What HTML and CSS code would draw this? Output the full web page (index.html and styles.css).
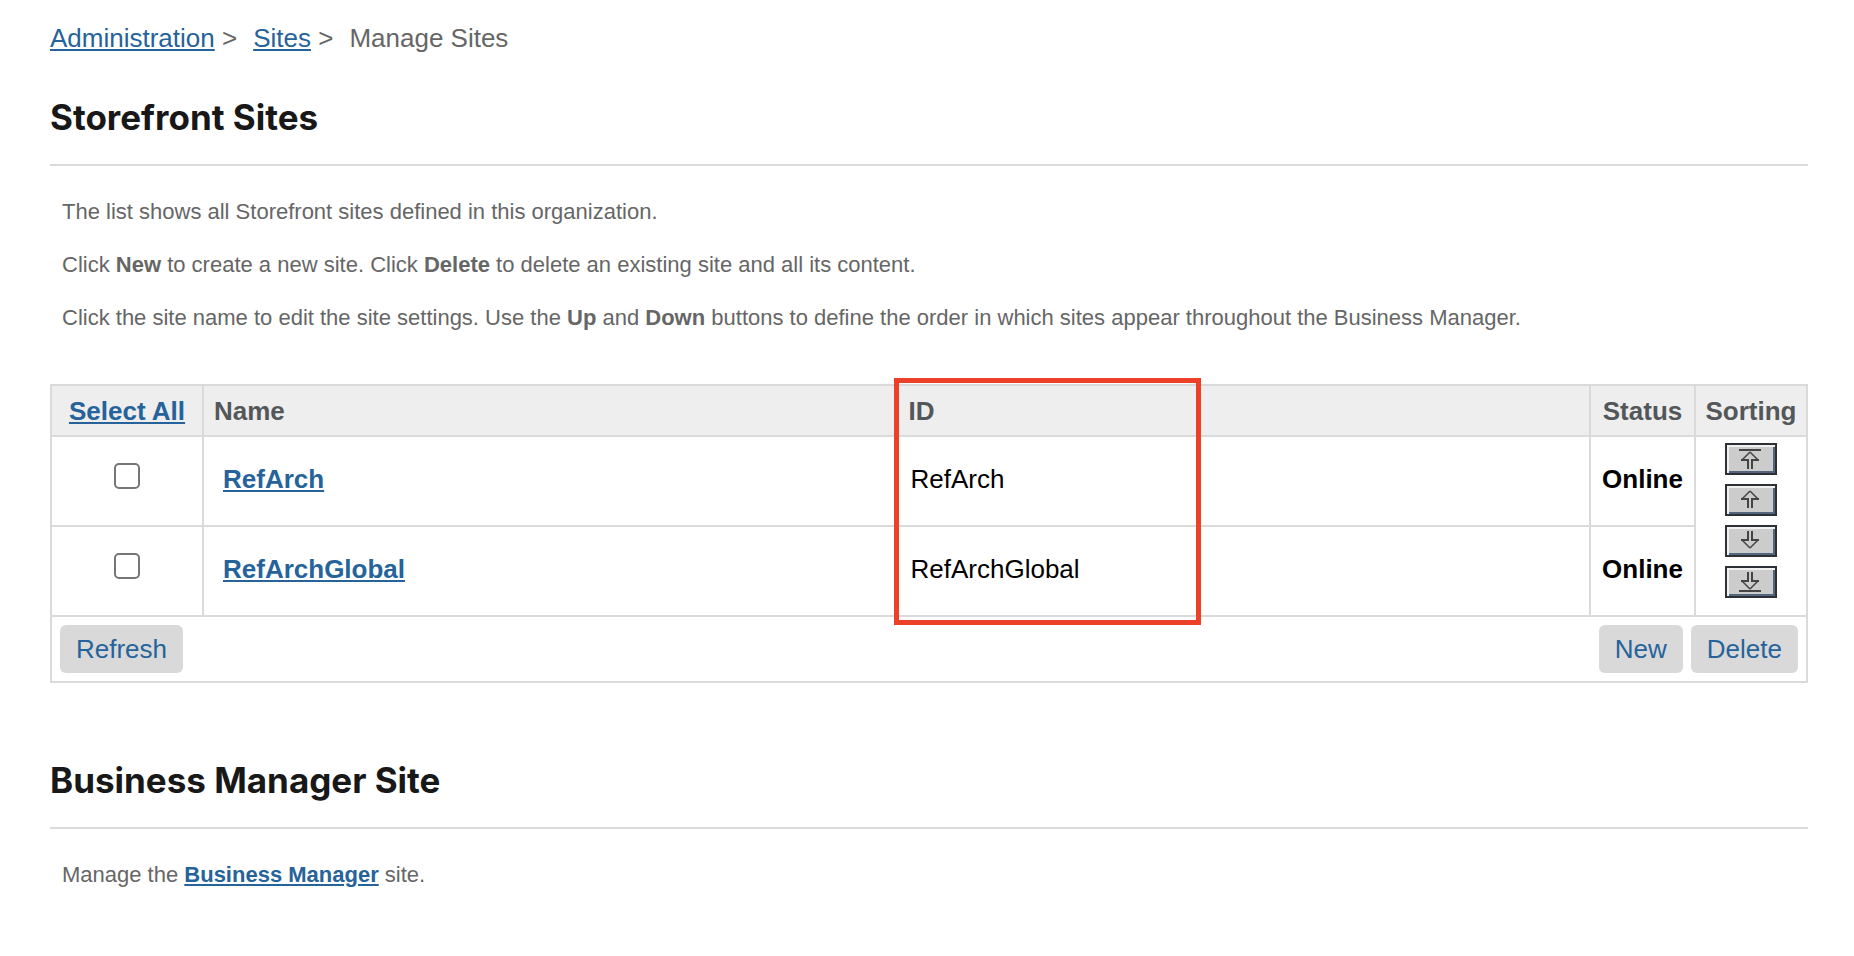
FILE: index.html
```html
<!DOCTYPE html>
<html lang="en">
<head>
<meta charset="utf-8">
<title>Manage Sites</title>
<link rel="stylesheet" href="styles.css">
</head>
<body>
<main class="page">
  <nav class="breadcrumb" aria-label="Breadcrumb">
    <span><a href="#">Administration</a> &gt;</span>
    <span><a href="#">Sites</a> &gt;</span>
    <span>Manage Sites</span>
  </nav>

  <section>
    <h1 class="title">Storefront Sites</h1>
    <div class="description">
      <p>The list shows all Storefront sites defined in this organization.</p>
      <p>Click <b>New</b> to create a new site. Click <b>Delete</b> to delete an existing site and all its content.</p>
      <p>Click the site name to edit the site settings. Use the <b>Up</b> and <b>Down</b> buttons to define the order in which sites appear throughout the Business Manager.</p>
    </div>

    <div class="table-wrap">
      <table class="sites">
        <colgroup>
          <col class="col-select"><col><col><col class="col-status"><col class="col-sorting">
        </colgroup>
        <thead>
          <tr>
            <th class="center"><a href="#">Select All</a></th>
            <th class="name-head">Name</th>
            <th class="id-head">ID</th>
            <th class="center">Status</th>
            <th class="center">Sorting</th>
          </tr>
        </thead>
        <tbody>
          <tr>
            <td class="select"><input type="checkbox" aria-label="Select RefArch"></td>
            <td class="name"><a href="#">RefArch</a></td>
            <td class="id">RefArch</td>
            <td class="status">Online</td>
            <td class="sorting" rowspan="2">
              <div class="sort-list">
                <button class="sort" type="button" aria-label="Move to top">
                  <svg viewBox="0 0 52 32"><path class="bar" d="M14 7H36"/><path class="head" d="M25 9L17 17M25 9L33 17"/><path class="stem" d="M16 17H23V26M34 17H27V26"/></svg>
                </button>
                <button class="sort" type="button" aria-label="Move up">
                  <svg viewBox="0 0 52 32"><path class="head" d="M25 7L17 15M25 7L33 15"/><path class="stem" d="M16 15H23V24M34 15H27V24"/></svg>
                </button>
                <button class="sort" type="button" aria-label="Move down">
                  <svg viewBox="0 0 52 32"><path class="head" d="M25 23L17 15M25 23L33 15"/><path class="stem" d="M16 15H23V6M34 15H27V6"/></svg>
                </button>
                <button class="sort" type="button" aria-label="Move to bottom">
                  <svg viewBox="0 0 52 32"><path class="bar" d="M14 25H36"/><path class="head" d="M25 23L17 15M25 23L33 15"/><path class="stem" d="M16 15H23V6M34 15H27V6"/></svg>
                </button>
              </div>
            </td>
          </tr>
          <tr>
            <td class="select"><input type="checkbox" aria-label="Select RefArchGlobal"></td>
            <td class="name"><a href="#">RefArchGlobal</a></td>
            <td class="id">RefArchGlobal</td>
            <td class="status">Online</td>
          </tr>
        </tbody>
        <tfoot>
          <tr>
            <td class="actions" colspan="5">
              <div class="action-row">
                <button class="button" type="button">Refresh</button>
                <div class="action-group">
                  <button class="button" type="button">New</button>
                  <button class="button" type="button">Delete</button>
                </div>
              </div>
            </td>
          </tr>
        </tfoot>
      </table>
      <div class="highlight"></div>
    </div>
  </section>

  <section>
    <h2 class="title">Business Manager Site</h2>
    <div class="description">
      <p>Manage the <a href="#"><b>Business Manager</b></a> site.</p>
    </div>
  </section>
</main>
</body>
</html>
```
FILE: styles.css
```css
* { box-sizing: border-box; }

body {
  margin: 0;
  background: #fff;
  color: #666;
  font-family: "Liberation Sans", Arial, sans-serif;
  font-size: 26px;
  line-height: 30px;
}

a {
  color: #25639a;
  text-decoration-thickness: 2px;
  text-underline-offset: 2px;
}

.page { padding: 23px 46px 40px 50px; }

.breadcrumb { display: flex; gap: 16px; }

.title {
  margin: 0;
  padding: 42px 0 24px;
  border-bottom: 2px solid #dadada;
  color: #181818;
  font-family: Inter, sans-serif;
  font-size: 35px;
  font-weight: 700;
  line-height: 45px;
}

.description {
  display: flex;
  flex-direction: column;
  gap: 24px;
  padding: 31px 12px 0;
  font-size: 22px;
  line-height: 29px;
}

.description p { margin: 0; }

.table-wrap {
  position: relative;
  margin: 52px 0 33px;
}

.sites {
  width: 100%;
  table-layout: fixed;
  border: 2px solid #dadada;
  border-collapse: collapse;
}

.col-select { width: 152px; }
.col-status { width: 105px; }
.col-sorting { width: 112px; }

.sites th {
  height: 51px;
  padding: 0;
  border: 2px solid #dadada;
  background: #eee;
  color: #54575a;
  text-align: left;
}

.sites td {
  height: 90px;
  padding: 0 0 4px;
  border: 2px solid #dadada;
}

.sites .center, .sites .select, .sites .status, .sites .sorting { text-align: center; }
.sites .name-head { padding-left: 10px; border-right: 0; }
.sites .id-head { padding-left: 12px; border-left: 0; }
.sites .name { padding-left: 19px; border-right: 0; font-weight: 700; }
.sites .id { padding-left: 14px; border-left: 0; color: #000; }
.sites .status { color: #000; font-weight: 700; }
.sites .sorting { padding-top: 6px; vertical-align: top; }
.sites .select { padding-bottom: 10px; }

.select input {
  display: block;
  width: 26px;
  height: 26px;
  margin: 0 auto;
  appearance: none;
  border: 2px solid #767676;
  border-radius: 5px;
  background: #fff;
}

.sort-list {
  display: flex;
  flex-direction: column;
  align-items: center;
  gap: 9px;
}

.sort {
  display: block;
  width: 52px;
  height: 32px;
  padding: 0;
  border: 2px solid #2d3035;
  background: #ccc;
  box-shadow: inset 2px 2px 0 #f1f1f1, inset -2px -2px 0 #53667d;
}

.sort svg {
  display: block;
  width: 52px;
  height: 32px;
  margin: -2px;
  fill: none;
  stroke: #444;
  stroke-width: 2;
}

.sort .head { stroke-width: 1.5; }

.sites .actions { height: 66px; padding: 8px; }
.action-row { display: flex; justify-content: space-between; }
.action-group { display: flex; gap: 8px; }

.button {
  height: 48px;
  padding: 0 16px;
  border: 0;
  border-radius: 6px;
  background: #d9d9d9;
  color: #25639a;
  font: inherit;
}

.highlight {
  position: absolute;
  top: -6px;
  bottom: 58px;
  left: 48%;
  width: 307px;
  border: 5px solid #ed4028;
  pointer-events: none;
}
```
